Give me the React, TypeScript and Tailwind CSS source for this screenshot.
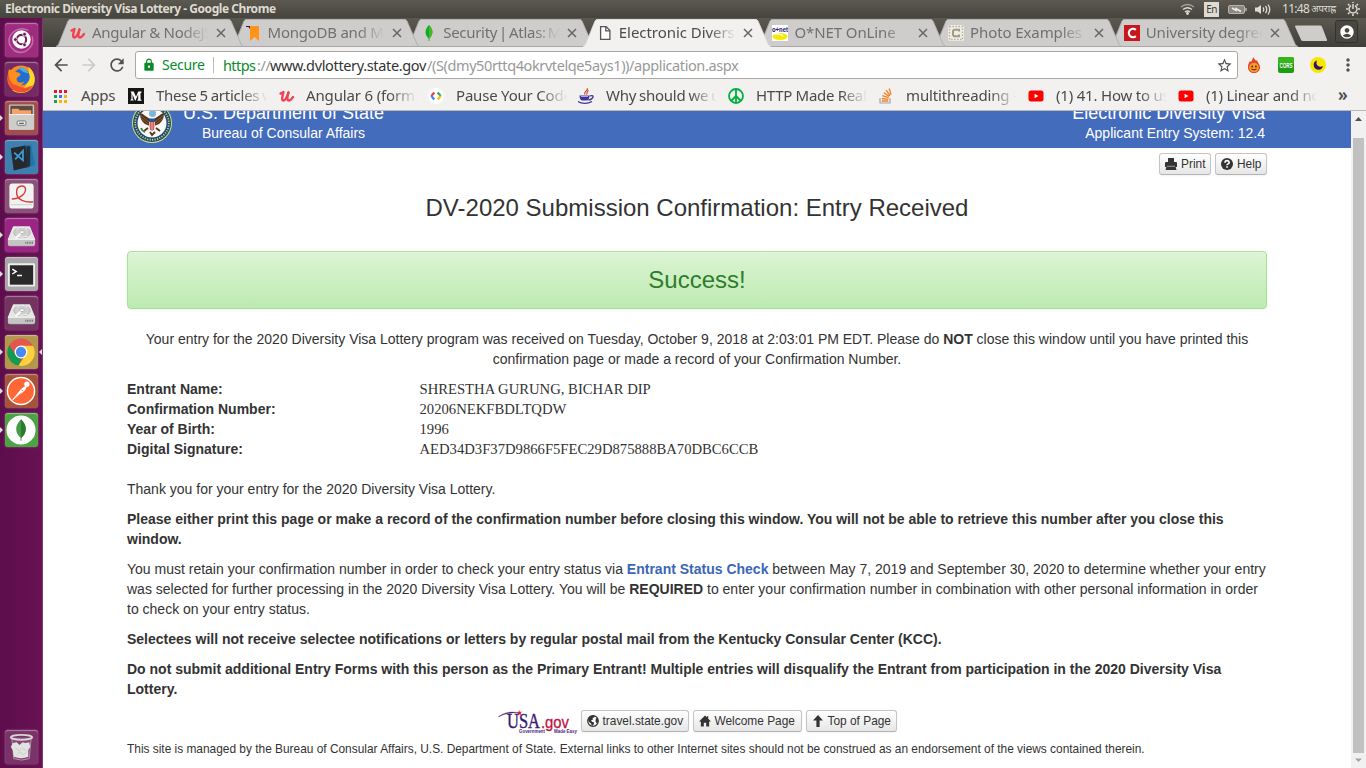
import type { ReactNode } from 'react';
import { MdArrowBack, MdArrowForward, MdRefresh, MdLock, MdStarBorder, MdMoreVert, MdAccountCircle } from 'react-icons/md';

const ui = "font-['Noto_Sans','Open_Sans',sans-serif]";

function Udemy() {
  return (
    <svg width="16" height="16" viewBox="0 0 16 16" fill="none" stroke="#f0434f" strokeLinecap="round" strokeLinejoin="round">
      <path d="M1.500 5.500 4.500 4C3.500 8 2 12.500 4.500 12.500S8 8 9.500 4.500" strokeWidth="2.300" />
      <path d="M9.500 4.500C8.500 8 7.500 12.500 9.700 12.500c2 0 3.300-2 4.300-3.500" strokeWidth="2.300" />
    </svg>
  );
}
function Bookmark() {
  return (
    <svg width="16" height="16" viewBox="0 0 16 16">
      <path d="M4 1h9v15l-4.500-4L4 16z" fill="#ff9416" />
      <path d="M0 1h4v3L2.500 2H0z" fill="#480a50" />
    </svg>
  );
}
function Leaf() {
  return (
    <svg width="16" height="16" viewBox="0 0 16 16">
      <path d="M8 0c4 4 5 9 .4 13.500V16h-.8v-2.500C3 9 4 4 8 0z" fill="#13aa21" />
      <path d="M8 0c4 4 5 9 .4 13.500H8z" fill="#42b82f" />
    </svg>
  );
}
function Doc() {
  return (
    <svg width="16" height="16" viewBox="0 0 16 16" fill="#fff" stroke="#555" strokeWidth="1.300">
      <path d="M3.600 1.700h5.600l3.700 3.700v8.900H3.600z" />
      <path d="M8.800 1.700v4.100h4.100" fill="none" />
    </svg>
  );
}
function Onet() {
  return (
    <svg width="16" height="16" viewBox="0 0 16 16">
      <rect width="16" height="16" fill="#fff" />
      <ellipse cx="8" cy="11.500" rx="7.500" ry="3.500" fill="#f8e800" />
      <path d="M1 9.500c4-1.500 9 0 10 2" stroke="#fff" fill="none" strokeWidth="1.200" />
      <text x="0" y="6.500" fontSize="6.500" fontWeight="700" textLength="16" lengthAdjust="spacingAndGlyphs" fill="#1b1574" fontFamily="Liberation Sans">o+net</text>
    </svg>
  );
}
function PhotoC() {
  return (
    <svg width="16" height="16" viewBox="0 0 16 16">
      <rect width="16" height="16" rx="2" fill="#f1ede0" />
      <rect x="1.500" y="1.500" width="13" height="13" fill="none" stroke="#b5b0a0" strokeWidth="1.400" strokeDasharray="1.500 1.500" />
      <path d="M11 6.500V4.800H6.200L5 6v4l1.200 1.300H11V9.600" fill="none" stroke="#a09b8c" strokeWidth="2" />
    </svg>
  );
}
function RedC() {
  return (
    <svg width="16" height="16" viewBox="0 0 16 16">
      <rect width="16" height="16" fill="#c8161d" />
      <path d="M11.800 4.800A4.200 4.200 0 1 0 11.800 11.200" fill="none" stroke="#fff" strokeWidth="2.200" />
    </svg>
  );
}

type TabData = { icon: ReactNode; title: string; look: string; z: string; active?: boolean };
const tabs: TabData[] = [
  { icon: <Udemy />, title: 'Angular & NodeJS', look: 'tracking-[-0.3px]', z: 'z-[7]' },
  { icon: <Bookmark />, title: 'MongoDB and Mo', look: 'tracking-[-0.25px]', z: 'z-[6]' },
  { icon: <Leaf />, title: 'Security | Atlas: Mo', look: 'tracking-[-0.3px] [word-spacing:-1.600px]', z: 'z-[5]' },
  { icon: <Doc />, title: 'Electronic Diversity', look: 'tracking-[-0.05px]', z: 'z-[9]', active: true },
  { icon: <Onet />, title: 'O*NET OnLine', look: 'tracking-[-0.1px]', z: 'z-[3]' },
  { icon: <PhotoC />, title: 'Photo Examples', look: 'tracking-[-0.1px]', z: 'z-[2]' },
  { icon: <RedC />, title: 'University degrees', look: 'tracking-[-0.1px] [word-spacing:-0.800px]', z: 'z-[1]' },
];

function Tab({ t }: { t: TabData }) {
  return (
    <div className={`relative -mr-[12.400px] flex h-[29px] w-[188px] shrink-0 items-center pl-[14px] ${t.z}`}>
      <svg className="absolute inset-0" width="188" height="29" viewBox="0 0 188 29">
        <path d="M0 29 2.500 26.500 12 3Q12.800 1 15 1H172Q174.200 1 175 3L185.500 27 188 29z" fill={t.active ? '#f2f1f0' : '#cfcdcc'} />
        <path d="M0 28.500 2.500 26.500 12 3Q12.800 1.500 15 1.500H172Q174.200 1.500 175 3L185.500 27 188 28.500" fill="none" stroke={t.active ? '#dedcda' : '#b0aeac'} strokeWidth=".9" />
        {!t.active && <path d="M1 28.500H187" stroke="#a9a7a5" />}
      </svg>
      <span className="relative flex w-4">{t.icon}</span>
      <span
        className={`relative -mt-px ml-[6px] w-[118px] overflow-hidden whitespace-nowrap text-[15px] leading-[22px] [mask-image:linear-gradient(to_right,#000_90px,transparent_117px)] ${ui} ${t.look} ${t.active ? 'text-[#4c4c4c]' : 'text-[#707070]'}`}
      >
        {t.title}
      </span>
      <svg className="relative ml-[6px]" width="10" height="10" viewBox="0 0 10 10" stroke="#666" strokeWidth="1.500">
        <path d="M1 1l8 8M9 1l-8 8" />
      </svg>
    </div>
  );
}

function Medium() {
  return (
    <svg width="16" height="16" viewBox="0 0 16 16">
      <rect width="16" height="16" fill="#151515" />
      <path d="M2.500 3.500h3.200L8 8.800l2.200-5.300h3.300v1l-1 .8v6l1 .8v.7H9.300v-.7l.9-.9V6.300L7.600 12.500H7L4.600 6.600v4.300l1 1v.6H2.400v-.6l1-1V5.200z" fill="#fff" />
    </svg>
  );
}
function GDev() {
  return (
    <svg width="16" height="16" viewBox="0 0 16 16" fill="none" strokeWidth="2.200">
      <circle cx="8" cy="8" r="8" fill="#fff" />
      <path d="M6.300 4.600 3.300 8" stroke="#ea4335" />
      <path d="M3.300 8l3 3.400" stroke="#4285f4" />
      <path d="M9.700 4.600l3 3.400" stroke="#34a853" />
      <path d="M12.700 8l-3 3.400" stroke="#fbbc05" />
    </svg>
  );
}
function Java() {
  return (
    <svg width="16" height="16" viewBox="0 0 16 16" fill="none">
      <path d="M9 .3C11 2 5 4 7 6.500M10.500 2.500C8 4 10 5 8.500 6.700" stroke="#d34324" strokeWidth="1.100" />
      <path d="M1.500 7.500h10c0 3-1 5-3 5h-4c-2 0-3-2-3-5z" fill="#3f369b" />
      <path d="M3 8.500h7" stroke="#aaa5dc" />
      <path d="M11.500 8c3-1 4.500 0 3 2s-3 2-4 2M0 13.500c3 2.400 10 2.400 14 0" stroke="#3f369b" strokeWidth="1.300" />
    </svg>
  );
}
function Peace() {
  return (
    <svg width="16" height="16" viewBox="0 0 16 16" fill="none" stroke="#00b140" strokeWidth="1.800">
      <circle cx="8" cy="8" r="7" />
      <path d="M8 1v14M8 8l-5 5M8 8l5 5" />
    </svg>
  );
}
function Stack() {
  return (
    <svg width="14" height="16" viewBox="0 0 14 16" fill="none" strokeWidth="1.200">
      <path d="M1 10v5h10v-5" stroke="#a3a4a6" />
      <path d="M2.800 13h6.500M2.800 10.500l6.600.9M3.300 7.700l6.300 2M4.800 4.800l5.500 3.600M7 2.200l4.100 5.300M10.200.5l1.900 6" stroke="#f48024" strokeWidth="1.300" />
    </svg>
  );
}
function Youtube() {
  return (
    <svg width="16" height="16" viewBox="0 0 16 16">
      <rect x=".5" y="2.500" width="15" height="11" rx="2.500" fill="#f00" />
      <path d="M6.600 5.800v4.400L10.400 8z" fill="#fff" />
    </svg>
  );
}

const bookmarks = [
  { icon: <Medium />, box: 'w-[151px]', title: 'These 5 articles will', gap: 'ml-[12px]', look: 'tracking-[-0.25px] [word-spacing:-0.700px]' },
  { icon: <Udemy />, box: 'w-[149px]', title: 'Angular 6 (formerly', gap: 'ml-[11px]', look: 'tracking-[-0.15px]' },
  { icon: <GDev />, box: 'w-[150px]', title: 'Pause Your Code', gap: 'ml-[12px]', look: 'tracking-[-0.2px]' },
  { icon: <Java />, box: 'w-[150px]', title: 'Why should we use', gap: 'ml-[12px]', look: 'tracking-[-0.25px] [word-spacing:-0.700px]' },
  { icon: <Peace />, box: 'w-[151px]', title: 'HTTP Made Really', gap: 'ml-[12px]', look: 'tracking-[-0.3px]' },
  { icon: <Stack />, box: 'w-[149px]', title: 'multithreading -', gap: 'ml-[13px]', look: 'tracking-[-0.15px]' },
  { icon: <Youtube />, box: 'w-[150px]', title: '(1) 41. How to use', gap: 'ml-[12px]', look: 'tracking-[-0.2px]' },
  { icon: <Youtube />, box: 'w-[150px]', title: '(1) Linear and non', gap: 'ml-[12px]', look: 'tracking-[-0.25px]' },
];

const appColors = ['#e8173a', '#e8173a', '#e8173a', '#18a055', '#4b6ff0', '#f7b50c', '#18a055', '#f7b50c', '#f7b50c'];

function Disk() {
  return (
    <svg width="34" height="34" viewBox="0 0 34 34">
      <path d="M8 9h18l5 12v5.500q0 2-2 2H5q-2 0-2-2V21z" fill="#aaa" />
      <path d="M8.500 8h17L31 21.500H3z" fill="#e6e6e6" />
      <ellipse cx="17.500" cy="14.500" rx="8.500" ry="5.300" fill="#cfcfcf" stroke="#a0a0a0" strokeWidth=".7" />
      <path d="M12 11q5-4 11 0M12 18q6 3 11 0" fill="none" stroke="#f6f6f6" />
      <ellipse cx="17.500" cy="14" rx="2.400" ry="1.500" fill="#fff" stroke="#999" strokeWidth=".6" />
      <path d="M11 20.500l5-5" stroke="#fafafa" strokeWidth="2" />
      <path d="M3 21.500h28V26q0 2-2 2H5q-2 0-2-2z" fill="#c4c4c4" />
      <path d="M3 21.500h28" stroke="#f5f5f5" />
      <path d="M21 25h8" stroke="#777" strokeWidth="2" strokeDasharray="1 .7" />
    </svg>
  );
}

const launchers: { bg: string; mark?: boolean; art: ReactNode }[] = [
  {
    bg: 'bg-[#a02c80]',
    art: (
      <svg width="34" height="34" viewBox="0 0 34 34" fill="none">
        <path d="M5 23C1 10 14 2 24 7M9 28c12 6 22-5 19-15M4 17C5 28 14 31 21 29" stroke="#d59bc4" strokeWidth="1.500" opacity=".6" />
        <circle cx="17" cy="16.500" r="9.500" fill="#fff" />
        <circle cx="17" cy="16.500" r="4.800" stroke="#731a5e" strokeWidth="2.100" />
        <g fill="#731a5e" stroke="#fff" strokeWidth=".8"><circle cx="10.800" cy="16.500" r="2" /><circle cx="20.100" cy="11.100" r="2" /><circle cx="20.100" cy="21.900" r="2" /></g>
      </svg>
    ),
  },
  {
    bg: 'bg-[#742a62]',
    art: (
      <svg width="34" height="34" viewBox="0 0 34 34">
        <circle cx="16.500" cy="17" r="14" fill="#ff8a1c" />
        <path d="M24 4c8 6 9 18 2 24-6 5-14 4-19 0 11 3 20-4 17-24z" fill="#ffd52b" />
        <path d="M4 8C0 18 5 30 16 31c7 0 11-3 13-8-4 3-12 5-17 0C5 19 10 12 10 12z" fill="#f5502c" />
        <circle cx="17" cy="15" r="8.500" fill="#256ed0" />
        <path d="M4 7c3 2 5 1 8 3 3 0 4 2 4 3s-4 2-4 4c0 4 5 5 8 2-2 7-12 6-15-1-1-3-2-7-1-11z" fill="#ff8e1f" />
        <path d="M14 5c4-1 9 2 10 6-4 0-8-2-10-6z" fill="#41b1eb" />
      </svg>
    ),
  },
  {
    bg: 'bg-[#a04e4d]', mark: true,
    art: (
      <svg width="34" height="34" viewBox="0 0 34 34">
        <rect x="4" y="3" width="26" height="26" rx="1.500" fill="#c9c6c1" />
        <path d="M5.500 4.500h23V14h-23z" fill="#5f4b3f" />
        <path d="M7 8.500q0-1 1-1h6l1 1.500h12v6H7z" fill="#f3a269" />
        <path d="M4 13h26v15q0 1-1.500 1h-23Q4 29 4 28z" fill="#cfcdc9" />
        <path d="M4 13.500h26" stroke="#f4f3f2" />
        <rect x="12.500" y="20" width="9" height="4.500" rx="1" fill="#eee" stroke="#777" />
        <path d="M14.500 22.500h5" stroke="#666" strokeWidth="1.300" />
      </svg>
    ),
  },
  {
    bg: 'bg-[#3d7fae]', mark: true,
    art: (
      <svg width="34" height="34" viewBox="0 0 34 34">
        <path d="M6 8l16-3 3 22-16 4z" fill="#26282c" />
        <path d="M21 5l6-1 1 7 3 14-7 3z" fill="#2274a8" />
        <path d="M22 6h4v20l-4 2z" fill="#22303c" />
        <path d="M9.500 12.500l9 8V10.500L10.500 19.500" fill="none" stroke="#3c9ddb" strokeWidth="1.800" />
      </svg>
    ),
  },
  {
    bg: 'bg-[#8c5178]',
    art: (
      <svg width="34" height="34" viewBox="0 0 34 34" fill="none">
        <rect x="4.500" y="4" width="25" height="26" rx="3" fill="#f3f2f2" />
        <path d="M6 26h22" stroke="#ccc" />
        <path d="M7 20c9 0 15-6 14-11-1-4-10-3-9 5 0 7 9 10 17 9" stroke="#d83e3b" strokeWidth="1.500" />
      </svg>
    ),
  },
  { bg: 'bg-[#9c2485]', mark: true, art: <Disk /> },
  {
    bg: 'bg-[#aaa7a8]', mark: true,
    art: (
      <svg width="34" height="34" viewBox="0 0 34 34" fill="none">
        <rect x="3" y="6" width="28" height="24" rx="1.500" fill="#eee" />
        <rect x="5" y="8" width="24" height="20" fill="#292929" />
        <path d="M7.500 12l4 2.500-4 2.500M12.500 18.500h5" stroke="#fff" strokeWidth="1.500" />
      </svg>
    ),
  },
  { bg: 'bg-[#733560]', art: <Disk /> },
  {
    bg: 'bg-[#b3974b]', mark: true,
    art: (
      <svg width="34" height="34" viewBox="0 0 34 34">
        <circle cx="16.500" cy="17" r="14" fill="#e0584e" />
        <path d="M4.400 10 11 20l6 3.500L14 31A14 14 0 0 1 4.400 10z" fill="#149b52" />
        <path d="M16.500 10.500h12.400A14 14 0 0 1 14 31l7-11z" fill="#fdd03e" />
        <circle cx="16.500" cy="17" r="6.600" fill="#fff" />
        <circle cx="16.500" cy="17" r="5.300" fill="#4889f4" />
      </svg>
    ),
  },
  {
    bg: 'bg-[#a5543b]', mark: true,
    art: (
      <svg width="34" height="34" viewBox="0 0 34 34" fill="none">
        <circle cx="16.500" cy="17" r="14" fill="#ff6836" stroke="#fff" strokeWidth="1.500" />
        <path d="M8 26 17 15l3-2 2-.5-2 4-5 4-7 5.500z" fill="#fff" stroke="#fff" />
        <circle cx="22.500" cy="10" r="2.700" fill="#fff" />
        <path d="M17 16l2 1M10 25l7-6" stroke="#ff6836" strokeWidth=".8" />
      </svg>
    ),
  },
  {
    bg: 'bg-[#4ba341]', mark: true,
    art: (
      <svg width="34" height="34" viewBox="0 0 34 34">
        <circle cx="16.500" cy="17" r="15" fill="#fff" />
        <path d="M16.500 6c6 6 7 13 .5 19v3h-1v-3c-6.500-6-5.500-13 .5-19z" fill="#449b45" />
        <path d="M16.500 6c6 6 7 13 .5 19h-.5z" fill="#2d7932" />
      </svg>
    ),
  },
];

function Tile({ bg, art, mark }: { bg: string; art: ReactNode; mark?: boolean }) {
  return (
    <div className="flex h-[34px] w-[42px] shrink-0 items-center">
      <div className="w-[5px]">{mark && <svg width="3" height="6" viewBox="0 0 3 6"><path d="M0 0l3 3-3 3z" fill="#ddd" /></svg>}</div>
      <div className={`flex h-[34px] w-[33px] items-center justify-center overflow-hidden rounded-[3px] shadow-[0_0_2px_#ffffff60,inset_0_1px_1px_#ffffff60] ${bg}`}>{art}</div>
    </div>
  );
}

function Launcher() {
  return (
    <aside className="relative flex w-[43px] shrink-0 flex-col justify-between border-r border-[#7d3c6c] bg-linear-to-r from-[#5d0d4b] to-[#681253] pt-[5px] pb-[4px]">
      <div className="flex flex-col gap-[5px]">
        {launchers.map((l, i) => <Tile key={i} {...l} />)}
      </div>
      <Tile
        bg="bg-[#7a3269]"
        art={
          <svg width="34" height="34" viewBox="0 0 34 34" fill="none">
            <path d="M7 7l2 22q8 3 16 0l2-22" fill="#ffffff18" stroke="#b7a9b4" strokeWidth=".8" />
            <path d="M8 13l4-1 3 3 3-3 3 1 4-1 1 5-2 3v7q-7 3-15 0l-1-7-2-3z" fill="#e2e2df" />
            <path d="M11 18l4 3 3-3 4 3M12 25l3-3 4 3 3-3" stroke="#c7c7c4" strokeWidth=".8" />
            <ellipse cx="17" cy="7" rx="11" ry="2.500" stroke="#d5d5d2" strokeWidth="2" />
          </svg>
        }
      />
      <svg className="absolute top-[331px] right-0" width="3" height="6" viewBox="0 0 3 6"><path d="M3 0L0 3l3 3z" fill="#ddd" /></svg>
    </aside>
  );
}

function TopBar() {
  return (
    <div className="flex h-[18px] shrink-0 items-center justify-between bg-linear-to-b from-[#5b594f] to-[#45443e] pr-[6px] pl-[5px] text-[#dfdbd2]">
      <span className={`text-[12px] leading-[18px] font-bold tracking-[-0.45px] whitespace-nowrap ${ui}`}>Electronic Diversity Visa Lottery - Google Chrome</span>
      <div className="flex items-center">
        <svg width="15" height="12" viewBox="0 0 15 12" fill="none" stroke="#dfdbd2" strokeWidth="1.300">
          <path d="M1 4q6.500-5 13 0" opacity=".6" /><path d="M3 6.500q4.500-3.500 9 0M5 9q2.500-2 5 0" /><circle cx="7.500" cy="10.500" r=".8" fill="#dfdbd2" />
        </svg>
        <span className={`ml-[9px] flex h-[15px] w-[15px] items-center justify-center bg-[#dfdbd2] text-[10px] tracking-[-0.5px] text-[#3c3b37] ${ui}`}>En</span>
        <svg className="ml-[9px]" width="19" height="11" viewBox="0 0 19 11" fill="none" stroke="#b7b4ab">
          <rect x=".5" y="1.500" width="16" height="8" rx="1.500" fill="#8a8880" /><path d="M18 4v3" strokeWidth="1.500" /><path d="M4 4l4 2.500V4.500l5 3" stroke="#f0ede5" strokeWidth="1.500" />
        </svg>
        <svg className="ml-[8px]" width="16" height="13" viewBox="0 0 16 13" fill="none" stroke="#dfdbd2" strokeWidth="1.300">
          <path d="M0 4.500h2.500L6 2v9L2.500 8.500H0z" fill="#dfdbd2" stroke="none" /><path d="M8 4.500q1.500 2 0 4M10.500 3q2.500 3.500 0 7M13 1.500q3.500 5 0 10" />
        </svg>
        <span className="ml-[11px] flex w-[55px] items-center gap-[2px] text-[12px] leading-[18px] tracking-[-0.7px] whitespace-nowrap font-['Noto_Sans','Noto_Sans_Devanagari',sans-serif]">11:48 <span className="text-[9.500px] tracking-normal">अपराह्न</span></span>
        <svg className="ml-[9px]" width="14" height="14" viewBox="0 0 14 14" fill="none" stroke="#dfdbd2">
          <path d="M5 3.600a4 4 0 1 0 4 0M7 2v5" strokeWidth="1.500" />
          <path d="M7 0v1M2 2l1.500 1.500M12 2l-1.500 1.500M0 7h2M12 7h2M2 12l1.500-1.500M12 12l-1.500-1.500M7 14v-2" strokeWidth="1.600" />
        </svg>
      </div>
    </div>
  );
}

function TabStrip() {
  return (
    <div className="flex h-[29px] shrink-0 bg-linear-to-b from-[#5b594f] to-[#403f3a] pl-[13px]">
      {tabs.map((t) => <Tab key={t.title} t={t} />)}
      <svg className="mt-[7px] ml-[9px] shrink-0" width="34" height="17" viewBox="0 0 34 17"><path d="M1 1.500Q1 .5 2 .5h24q1.500 0 2 1.200l5 13q.5 1.300-1 1.300H9q-1.500 0-2-1.200z" fill="#cfcdcc" /></svg>
      <div className="mt-[2px] ml-[7px] flex h-[23px] w-[23px] shrink-0 items-center justify-center rounded-[3px] border border-[#33322e] bg-[#484740] text-white"><MdAccountCircle size={16} /></div>
    </div>
  );
}

function Toolbar() {
  return (
    <div className="flex h-[36px] shrink-0 items-center bg-[#f2f1f0] pl-[8px] text-[#505050]">
      <MdArrowBack size={20} />
      <MdArrowForward size={20} className="ml-[8px] text-[#cbcac9]" />
      <MdRefresh size={20} className="ml-[8px]" />
      <div className="ml-[8px] flex h-[28px] w-[1103px] items-center rounded-[3px] border border-[#a9a8a7] bg-white pl-[6px]">
        <MdLock size={14} className="text-[#0b8a2a]" />
        <span className={`ml-[6px] w-[43px] text-[14px] leading-[20px] whitespace-nowrap text-[#0b8a2a] tracking-[-0.3px] ${ui}`}>Secure</span>
        <span className="ml-[8px] h-4 w-px bg-[#bbb]" />
        <span className={`ml-[9px] flex w-[520px] text-[14.500px] leading-[20px] whitespace-nowrap text-[#999] ${ui}`}>
          <span className="w-[34px] text-[#0b8a2a] tracking-[-0.6px]">https</span>
          <span className="w-[13px] tracking-[-0.4px]">://</span>
          <span className="w-[157px] text-[#333] tracking-[-0.350px]">www.dvlottery.state.gov</span>
          <span className="tracking-[-0.4px]">/(S(dmy50rttq4okrvtelqe5ays1))/application.aspx</span>
        </span>
        <MdStarBorder size={17} className="mr-[4px] ml-auto" />
      </div>
      <svg className="ml-[8px]" width="16" height="17" viewBox="0 0 16 17">
        <path d="M7 0c1 2 3 3 3 4l1-1c0 2 3 4 3 7 0 4-3 6-6 6s-6-2-6-6c0-3 1-4 2-6l1 1c1-2 2-3 2-5z" fill="#e34224" />
        <circle cx="8" cy="10.500" r="4.800" fill="#f99b26" /><circle cx="6.200" cy="9.500" r=".9" fill="#472719" /><circle cx="9.900" cy="9.500" r=".9" fill="#472719" /><path d="M5.500 12q2.500 2 5 0" stroke="#472719" fill="none" />
      </svg>
      <svg className="ml-[16px]" width="16" height="16" viewBox="0 0 16 16">
        <rect width="16" height="16" rx="2" fill="#209c10" />
        <path d="M2 0h12q2 0 2 2v5H0V2q0-2 2-2z" fill="#37b51c" />
        <text x="1.500" y="10.500" fontSize="7" fontWeight="700" textLength="13" lengthAdjust="spacingAndGlyphs" fill="#fff" fontFamily="Liberation Sans">CORS</text>
      </svg>
      <svg className="ml-[16px]" width="16" height="16" viewBox="0 0 16 16"><circle cx="8" cy="8" r="8" fill="#f7e600" /><path d="M7 3.500a4.700 4.700 0 1 0 6 5.500c-4 2-8-1-6-5.500z" fill="#32126d" /></svg>
      <MdMoreVert size={20} className="ml-[12px]" />
    </div>
  );
}

function BookmarkBar() {
  return (
    <div className="flex h-[28px] shrink-0 items-center border-b border-[#b9b8b7] bg-[#f2f1f0] pb-px pl-[11px] text-[#4a4a4a]">
      <div className="grid grid-cols-3 gap-[2px]">
        {appColors.map((c, i) => <span key={i} className="h-[3px] w-[3px]" style={{ backgroundColor: c }} />)}
      </div>
      <span className={`-mt-[2px] ml-[14px] w-[47px] text-[15px] leading-[20px] tracking-[-0.3px] ${ui}`}>Apps</span>
      {bookmarks.map((b) => (
        <div key={b.title} className={`flex shrink-0 items-center ${b.box}`}>
          {b.icon}
          <span className={`-mt-[2px] w-[112px] overflow-hidden text-[15px] leading-[22px] whitespace-nowrap [mask-image:linear-gradient(to_right,#000_84px,transparent_111px)] ${b.gap} ${b.look} ${ui}`}>{b.title}</span>
        </div>
      ))}
      <span className={`-mt-[2px] ml-[10px] text-[17px] leading-[20px] font-semibold ${ui}`}>»</span>
    </div>
  );
}

function Seal() {
  return (
    <svg width="40" height="40" viewBox="0 0 40 40" fill="none">
      <circle cx="20" cy="20" r="20" fill="#d5db78" />
      <circle cx="20" cy="20" r="19" fill="#174b79" />
      <circle cx="20" cy="20" r="16.800" stroke="#d8cf62" strokeWidth="1.800" strokeDasharray="1.200 1.300" />
      <circle cx="20" cy="20" r="14.500" fill="#f8f8f5" />
      <circle cx="20.500" cy="10.500" r="3.500" fill="#78b7e4" />
      <path d="M18 16C14 14 12 11 8 10c0 4 1 8 5 11l5 2zM22 16c4-2 6-5 10-6 0 4-1 8-5 11l-5 2z" fill="#55331b" />
      <path d="M8 12l9 7M8.500 15l8 6M32 12l-9 7M31.500 15l-8 6" stroke="#a27a4b" strokeWidth=".6" />
      <path d="M17 16h6v6q0 4-3 6-3-2-3-6z" fill="#f1b8b0" />
      <path d="M17 15.500h6V19h-6z" fill="#2d548e" />
      <path d="M18.500 19v8M20 19v9M21.500 19v8" stroke="#c94348" strokeWidth=".8" />
      <path d="M16 25l-4 3M24 25l4 3M18 29l2 3 3-3" stroke="#533720" strokeWidth="1.800" />
      <path d="M9 25q1 3 4 4" stroke="#47844a" strokeWidth="2" />
    </svg>
  );
}

function Btn({ icon, label, box }: { icon: ReactNode; label: string; box: string }) {
  return (
    <button className={`flex h-[22px] items-center gap-[4px] rounded-[3px] border border-[#c5c5c5] border-b-[#b3b3b3] bg-linear-to-b from-white to-[#e6e6e6] pl-[5px] text-[11.900px] leading-[18px] whitespace-nowrap text-[#333] shadow-[0_1px_2px_#0000000d] ${box}`}>
      <span className="flex w-[12px] shrink-0 justify-center">{icon}</span>
      {label}
    </button>
  );
}

const PrintIcon = <svg width="12" height="12" viewBox="0 0 12 12" fill="#333"><path d="M3 0h6v4h2q1 0 1 1v4H0V5q0-1 1-1h2z" /><path d="M2 7h8l1.500 5H.500z" /><path d="M2 8.300h8" stroke="#ddd" strokeWidth=".6" /></svg>;
const HelpIcon = <svg width="12" height="12" viewBox="0 0 12 12"><circle cx="6" cy="6" r="6" fill="#333" /><path d="M4 4.700C4 2 8.200 2 8.200 4.500 8.200 6 6 5.800 6 7.200" fill="none" stroke="#fff" strokeWidth="1.600" /><path d="M5.200 8.300h1.700v1.500H5.200z" fill="#fff" /></svg>;
const GlobeIcon = <svg width="12" height="12" viewBox="0 0 12 12"><circle cx="6" cy="6" r="5.300" fill="#fff" stroke="#333" strokeWidth="1.200" /><path d="M1 4C2 1 5 0 8 1L7 2.500 5.500 3l.5 1.500L4 5.500l1 1.200 2 .8v1.500L5 11 4 8.500 1.500 6.500zM9 3l2 1v3L9.500 8.500 8.500 6z" fill="#333" /></svg>;
const HomeIcon = <svg width="13" height="12" viewBox="0 0 13 12" fill="#333"><path d="M6.500 0l2 2V.8H10v2.700L13 6.500h-2V12H7.800V8H5.200v4H2V6.500H0z" /></svg>;
const UpIcon = <svg width="10" height="12" viewBox="0 0 10 12" fill="#333"><path d="M5 0l5 5.500H6.600V12H3.400V5.500H0z" /></svg>;

function UsaGov() {
  return (
    <svg width="80" height="24" viewBox="0 0 80 24">
      <path d="M0 7C6 2 14 1 22 3 14 2.400 7 3.400 0 7z" fill="#4b236b" stroke="#4b236b" strokeWidth=".3" />
      <text x="9" y="18" fontSize="20" textLength="33" lengthAdjust="spacingAndGlyphs" fill="#3a1a72" stroke="#3a1a72" strokeWidth=".4" fontFamily="Liberation Serif">USA</text>
      <path d="M21 0l.9 2 2.100-.4-1.500 1.700 1 2-2-1-1.600 1.500.3-2.200-2-1 2.200-.4z" fill="#d21846" />
      <text x="43" y="18" fontSize="17" textLength="28" lengthAdjust="spacingAndGlyphs" fill="#be123e" stroke="#be123e" strokeWidth=".3" fontFamily="Liberation Sans">.gov</text>
      <text x="21" y="22.800" fontSize="4.600" textLength="26" lengthAdjust="spacingAndGlyphs" fill="#54247d" fontWeight="700" fontFamily="Liberation Sans">Government</text>
      <text x="56" y="22.800" fontSize="4.600" textLength="23" lengthAdjust="spacingAndGlyphs" fill="#54247d" fontWeight="700" fontFamily="Liberation Sans">Made Easy</text>
    </svg>
  );
}

const details = [
  ['Entrant Name:', 'SHRESTHA GURUNG, BICHAR DIP'],
  ['Confirmation Number:', '20206NEKFBDLTQDW'],
  ['Year of Birth:', '1996'],
  ['Digital Signature:', 'AED34D3F37D9866F5FEC29D875888BA70DBC6CCB'],
];

function Page() {
  return (
    <div className="flex h-[657px] w-[1308px] flex-col overflow-hidden bg-white text-[14px] leading-[20px] text-[#333] font-['Liberation_Sans',Arial,sans-serif]">
      <header className="flex h-[37px] shrink-0 items-end justify-between overflow-hidden bg-[#446cbc] pr-[86px] pb-[5px] pl-[89px] text-white">
        <div className="flex items-end">
          <Seal />
          <div className="ml-[11px] text-center"><div className="text-[18px]">U.S. Department of State</div><div>Bureau of Consular Affairs</div></div>
        </div>
        <div className="text-right"><div className="text-[18px]">Electronic Diversity Visa</div><div>Applicant Entry System: 12.4</div></div>
      </header>
      <main className="flex flex-col pr-[84px] pl-[84px]">
        <div className="mt-[5px] flex justify-end gap-[4px]">
          <Btn icon={PrintIcon} label="Print" box="w-[52px]" />
          <Btn icon={HelpIcon} label="Help" box="w-[52px]" />
        </div>
        <h1 className="mt-[13px] text-center text-[24px] leading-[40px]">DV-2020 Submission Confirmation: Entry Received</h1>
        <div className="mt-[23px] flex h-[58px] items-center justify-center rounded-[4px] border border-[#a3e28f] bg-linear-to-b from-[#dcf4d5] to-[#bdeab0] text-[24px] text-[#2d7d2d] shadow-[0_1px_2px_#0000000d,inset_0_1px_0_#ffffff40]">Success!</div>
        <p className="mt-[20px] text-center">
          Your entry for the 2020 Diversity Visa Lottery program was received on Tuesday, October 9, 2018 at 2:03:01 PM EDT. Please do <b>NOT</b> close this window until you have printed this<br />confirmation page or made a record of your Confirmation Number.
        </p>
        <dl className="mt-[10px]">
          {details.map(([k, v]) => (
            <div key={k} className="flex">
              <dt className="w-[292.500px] font-bold">{k}</dt>
              <dd className="text-[14.660px] font-['Liberation_Serif',serif]">{v}</dd>
            </div>
          ))}
        </dl>
        <p className="mt-[20px]">Thank you for your entry for the 2020 Diversity Visa Lottery.</p>
        <p className="mt-[10px] font-bold">Please either print this page or make a record of the confirmation number before closing this window. You will not be able to retrieve this number after you close this<br />window.</p>
        <p className="mt-[10px] whitespace-nowrap">
          You must retain your confirmation number in order to check your entry status via <a className="font-bold text-[#3c66b5]">Entrant Status Check</a> between May 7, 2019 and September 30, 2020 to determine whether your entry<br />
          was selected for further processing in the 2020 Diversity Visa Lottery. You will be <b>REQUIRED</b> to enter your confirmation number in combination with other personal information in order<br />
          to check on your entry status.
        </p>
        <p className="mt-[10px] font-bold">Selectees will not receive selectee notifications or letters by regular postal mail from the Kentucky Consular Center (KCC).</p>
        <p className="mt-[10px] font-bold">Do not submit additional Entry Forms with this person as the Primary Entrant! Multiple entries will disqualify the Entrant from participation in the 2020 Diversity Visa<br />Lottery.</p>
        <div className="mt-[11px] flex h-[24px] items-start justify-center gap-[4px]">
          <span className="-mr-px"><UsaGov /></span>
          <Btn icon={GlobeIcon} label="travel.state.gov" box="w-[108px]" />
          <Btn icon={HomeIcon} label="Welcome Page" box="w-[109px]" />
          <Btn icon={UpIcon} label="Top of Page" box="w-[91px]" />
        </div>
        <p className="mt-[5px] text-[11.900px]">This site is managed by the Bureau of Consular Affairs, U.S. Department of State. External links to other Internet sites should not be construed as an endorsement of the views contained therein.</p>
      </main>
    </div>
  );
}

function Scrollbar() {
  return (
    <div className="flex w-[15px] flex-col items-center justify-between bg-[#f1f1f1]">
      <svg width="15" height="15" viewBox="0 0 15 15"><path d="M4 10l3.500-4L11 10z" fill="#505050" /></svg>
      <div className="mt-[12px] w-[11px] grow bg-[#c1c1c1]" />
      <svg width="15" height="15" viewBox="0 0 15 15"><path d="M4 5.500h7L7.500 9z" fill="#a3a3a3" /></svg>
    </div>
  );
}

export default function App() {
  return (
    <div className="flex h-[768px] w-[1366px] flex-col overflow-hidden">
      <TopBar />
      <div className="flex h-[750px]">
        <Launcher />
        <div className="flex w-[1323px] flex-col">
          <TabStrip />
          <Toolbar />
          <BookmarkBar />
          <div className="flex h-[657px]"><Page /><Scrollbar /></div>
        </div>
      </div>
    </div>
  );
}
